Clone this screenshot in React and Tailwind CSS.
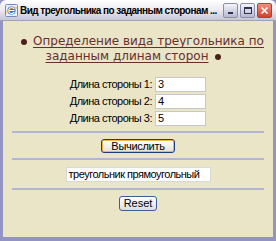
export default function App() {
  const sans = "font-['Liberation_Sans',Arial,sans-serif]";
  return (
    <div className="w-[276px] h-[241px] flex flex-col bg-[#9494c2] overflow-hidden">
      {/* title bar */}
      <div className="h-[21px] flex items-center bg-linear-to-b from-[#ffffff] via-[#ebebf1] to-[#c6c6d6] rounded-t-[6px] pl-[5px] pr-[4px] border-b border-[#a0a0b8]">
        <svg width="13" height="13" viewBox="0 0 13 13" className="shrink-0">
          <rect x="0.5" y="0.5" width="12" height="12" rx="1" fill="#e8eef8" stroke="#7a8ab0" />
          <circle cx="6.5" cy="6.5" r="4" fill="#2a6cd8" />
          <path d="M3.5 6.5h6M9.3 5.2a3 3 0 1 0 0 2.6" stroke="#fff" strokeWidth="1.2" fill="none" />
          <path d="M1 9 Q6 2 12 4" stroke="#f0b020" strokeWidth="1" fill="none" />
        </svg>
        <span className={`ml-[2px] text-[10px] tracking-[-0.55px] font-bold text-black whitespace-nowrap ${sans}`}>
          Вид треугольника по заданным сторонам ...
        </span>
        <div className="flex-1" />
        <div className="flex gap-[2px] items-center">
          <div className="w-[15px] h-[15px] rounded-[2px] border border-[#8d8dab] bg-linear-to-b from-[#f4f4fa] to-[#b8b8d0] flex items-end justify-center pb-[3px]">
            <div className="w-[5px] h-[2px] bg-[#303050]" />
          </div>
          <div className="w-[15px] h-[15px] rounded-[2px] border border-[#8d8dab] bg-linear-to-b from-[#f4f4fa] to-[#b8b8d0] flex items-center justify-center">
            <div className="w-[8px] h-[7px] border border-[#303050] border-t-2" />
          </div>
          <div className="w-[15px] h-[15px] rounded-[2px] border border-[#b04030] bg-linear-to-b from-[#f09080] to-[#d04028] flex items-center justify-center">
            <svg width="9" height="9" viewBox="0 0 9 9">
              <path d="M1.5 1.5L7.5 7.5M7.5 1.5L1.5 7.5" stroke="#fff" strokeWidth="1.6" />
            </svg>
          </div>
        </div>
      </div>

      {/* content */}
      <div className="flex-1 mx-[3px] mb-[4px] bg-[#ebe5c8] flex flex-col">
        <div className="pt-[13px] font-['DejaVu_Sans',Verdana,sans-serif] text-[12px] leading-[15px] text-[#6a2e2e] text-center">
          <div className="flex items-center justify-center pl-[9px]">
            <span className="w-[6px] h-[6px] rounded-full bg-[#4a2018] mr-[6px]" />
            <span className="underline underline-offset-2">Определение вида треугольника по</span>
          </div>
          <div className="flex items-center justify-center pr-[9px]">
            <span className="underline underline-offset-2">заданным длинам сторон</span>
            <span className="w-[6px] h-[6px] rounded-full bg-[#4a2018] ml-[7px]" />
          </div>
        </div>

        <div className={`mt-[13px] flex flex-col gap-[2px] text-[11px] text-black ${sans}`}>
          {["3", "4", "5"].map((v, i) => (
            <div key={i} className="flex items-center h-[15px]">
              <div className="w-[149px] text-right tracking-[-0.5px]">Длина стороны {i + 1}:</div>
              <div className="ml-[3px] w-[51px] h-[15px] bg-white border border-[#c8c8c8] pl-[2px] leading-[13px]">{v}</div>
            </div>
          ))}
        </div>

        <div className="mt-[5px] mx-[9px] h-[2px] bg-[#b4b4d4]" />

        <div className="mt-[6px] flex justify-center">
          <div className={`w-[74px] h-[14px] rounded-[3px] border border-[#1c3c7c] bg-linear-to-b from-[#ffffff] to-[#e2e2dc] shadow-[inset_0_0_0_1px_#f0b848] flex items-center justify-center text-[11px] tracking-[-0.3px] text-black ${sans}`}>
            Вычислить
          </div>
        </div>

        <div className="mt-[5px] mx-[9px] h-[2px] bg-[#b4b4d4]" />

        <div className="mt-[7px] flex justify-center">
          <div className={`w-[145px] h-[15px] bg-white border border-[#d8d8d8] pl-[2px] text-[11px] tracking-[-0.5px] leading-[13px] text-black whitespace-nowrap ${sans}`}>
            треугольник прямоугольный
          </div>
        </div>

        <div className="mt-[6px] mx-[9px] h-[2px] bg-[#b4b4d4]" />

        <div className="mt-[6px] flex justify-center">
          <div className={`w-[38px] h-[15px] rounded-[3px] border border-[#3c5c9c] bg-linear-to-b from-[#ffffff] to-[#dcdce6] flex items-center justify-center text-[11px] text-black ${sans}`}>
            Reset
          </div>
        </div>
      </div>
    </div>
  );
}
